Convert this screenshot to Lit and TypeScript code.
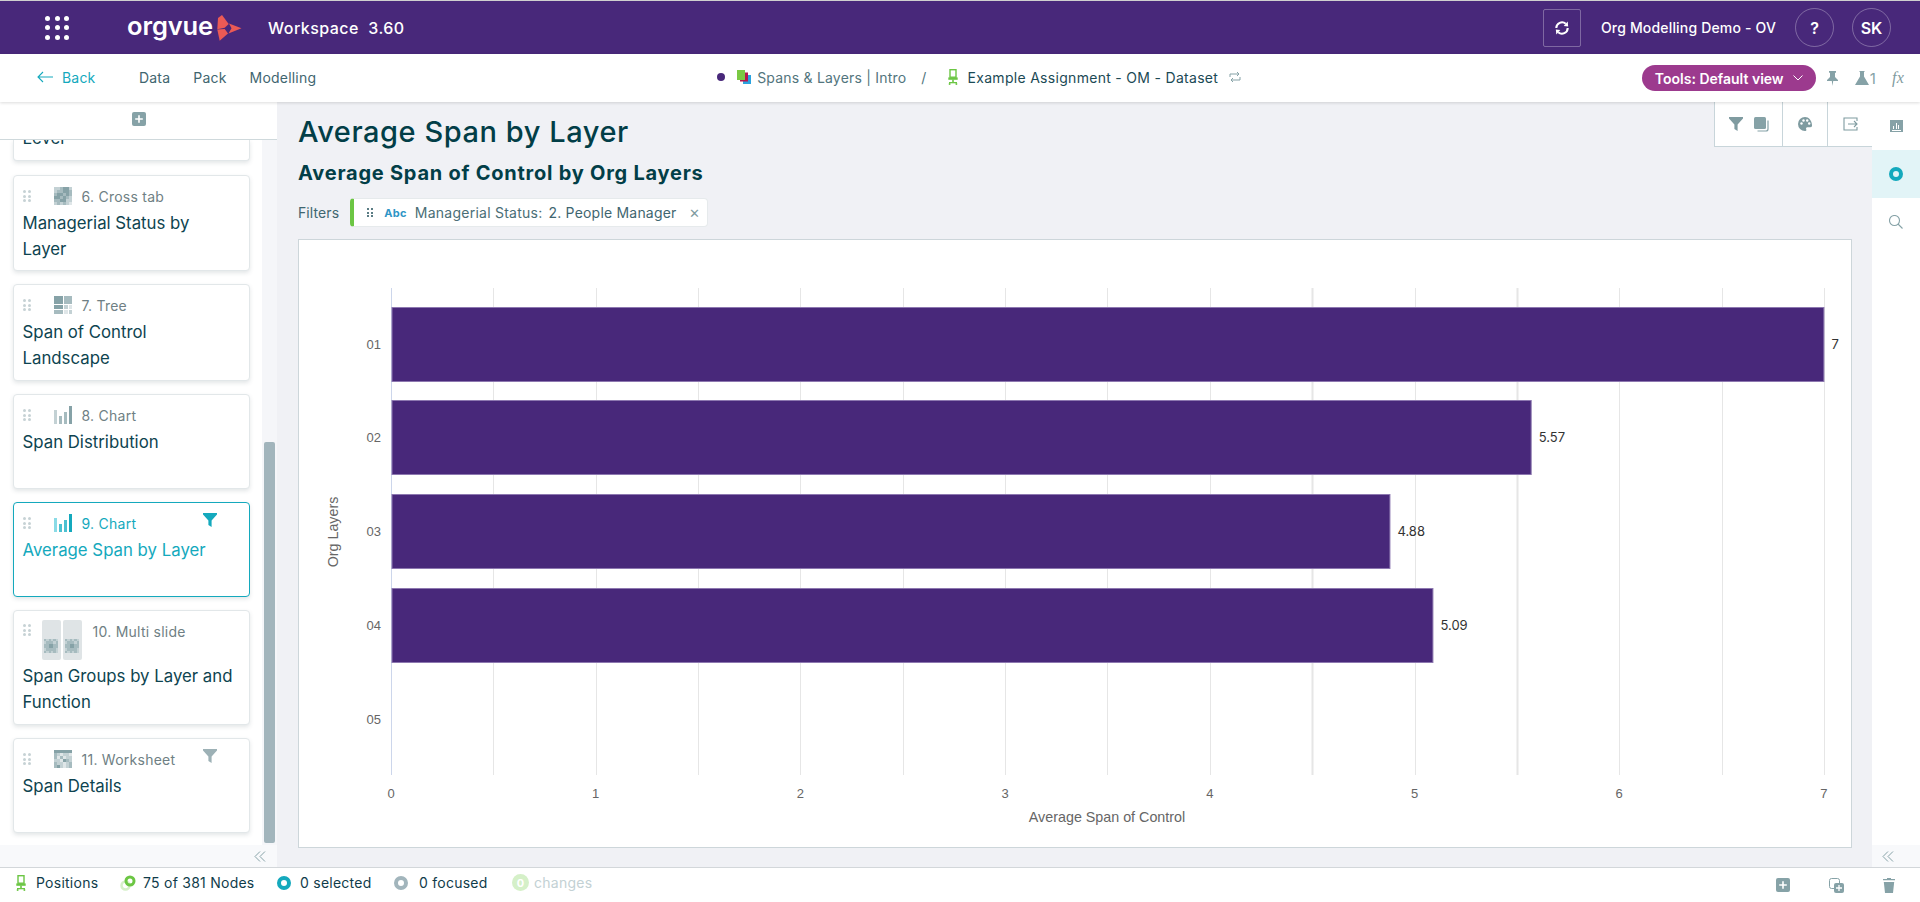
import { LitElement, html, css, svg } from "lit";
import { customElement } from "lit/decorators.js";

const funnel = (c: string) => html`<svg width="14" height="14" viewBox="0 0 14 14"><path fill="${c}" d="M0 0h14v1.6L8.6 7.4V14L5.4 12V7.4L0 1.6z"/></svg>`;

const mosaic = (cols: number, cells: number[], top = 0) => {
  const s = 18 / cols;
  const shades = ["#dfe6e8", "#c3d1d4", "#a6bbbf", "#86a2a7"];
  return html`<svg class="thumb" width="18" height="18" viewBox="0 0 18 18" shape-rendering="crispEdges">
    ${cells.map((v, i) => svg`<rect x="${(i % cols) * s}" y="${top + Math.floor(i / cols) * s}" width="${s}" height="${s}" fill="${shades[v]}"/>`)}
  </svg>`;
};
const crossCells = [1,1,2,3,3,1, 1,2,2,3,3,2, 2,3,3,2,3,2, 3,3,2,3,2,1, 2,2,3,3,1,1, 1,2,1,2,1,0];
const sheetCells = [3,3,3,3,3,3, 2,1,0,1,1,0, 2,0,2,0,1,1, 1,1,0,3,2,1, 2,1,1,0,1,2, 2,3,1,0,1,2];

const treeIcon = html`<svg class="thumb" width="18" height="18" viewBox="0 0 18 18" shape-rendering="crispEdges">
  <rect width="9" height="8" fill="#86a2a7"/><rect x="10" width="8" height="8" fill="#a6bbbf"/>
  <rect y="9" width="9" height="4" fill="#86a2a7"/><rect y="14" width="9" height="4" fill="#a6bbbf"/>
  <rect x="10" y="9" width="3.5" height="4" fill="#c3d1d4"/><rect x="14.5" y="9" width="3.5" height="4" fill="#dfe6e8"/>
  <rect x="10" y="14" width="3.5" height="4" fill="#dfe6e8"/><rect x="14.5" y="14" width="3.5" height="4" fill="#c3d1d4"/>
</svg>`;
const chartIcon = (a: string, b: string, c: string) => html`<svg class="thumb" width="18" height="18" viewBox="0 0 18 18" shape-rendering="crispEdges">
  <rect y="4" width="3" height="14" fill="${a}"/><rect x="5" y="10" width="3" height="8" fill="${b}"/>
  <rect x="10" y="6" width="3" height="12" fill="${b}"/><rect x="15" width="3" height="18" fill="${c}"/>
</svg>`;
function mosaicSmall() {
  return html`<svg width="14" height="14" viewBox="0 0 6 6" shape-rendering="crispEdges">
    ${[2,1,2,1,2,1, 1,2,2,2,1,2, 2,2,3,3,2,2, 2,2,3,3,2,2, 1,2,2,2,2,1, 2,1,2,1,2,1].map((v, i) =>
      svg`<rect x="${i % 6}" y="${Math.floor(i / 6)}" width="1" height="1" fill="${["#dfe6e8", "#c3d1d4", "#a6bbbf", "#86a2a7"][v]}"/>`)}
  </svg>`;
}
const multiIcon = html`<div class="multi">
  ${[0, 1].map(() => html`<div class="panel">${mosaicSmall()}</div>`)}
</div>`;
const chairIcon = html`<svg width="10" height="16" viewBox="0 0 10 16" fill="none">
  <rect x="2" y="0.7" width="6" height="7.5" stroke="#6cc644" stroke-width="1.4"/>
  <rect x="0.3" y="8.4" width="9.4" height="2.4" fill="#6cc644"/><rect x="4.2" y="10.6" width="1.6" height="3" fill="#6cc644"/>
  <rect x="1" y="13" width="8" height="1.3" fill="#6cc644"/><circle cx="1.6" cy="15" r="1" fill="#6cc644"/><circle cx="8.4" cy="15" r="1" fill="#6cc644"/>
</svg>`;
const ring = (c: string) => html`<span class="ring" style="border-color:${c}"></span>`;

interface Card { label: string; icon: unknown; title: string[]; size: string; filter?: string; active?: boolean; multi?: boolean; }
const cards: Card[] = [
  { label: "6. Cross tab", icon: mosaic(6, crossCells), title: ["Managerial Status by", "Layer"], size: "h96" },
  { label: "7. Tree", icon: treeIcon, title: ["Span of Control", "Landscape"], size: "h97" },
  { label: "8. Chart", icon: chartIcon("#c3d1d4", "#a6bbbf", "#86a2a7"), title: ["Span Distribution"], size: "h95" },
  { label: "9. Chart", icon: chartIcon("#8adbe6", "#4cc1d1", "#14a9bd"), title: ["Average Span by Layer"], filter: "#14a9bd", active: true, size: "h95" },
  { label: "10. Multi slide", icon: multiIcon, title: ["Span Groups by Layer and", "Function"], multi: true, size: "tall" },
  { label: "11. Worksheet", icon: mosaic(6, sheetCells), title: ["Span Details"], filter: "#9db1b6", size: "h95" },
];

const X0 = 92, UNIT = 204.7, GT = 48, GB = 535;
const bars = [
  { k: "01", v: 7, y: 67 },
  { k: "02", v: 5.57, y: 160 },
  { k: "03", v: 4.88, y: 254 },
  { k: "04", v: 5.09, y: 348 },
];

@customElement("app-root")
export class AppRoot extends LitElement {
  static styles = css`
    :host { display: flex; flex-direction: column; height: 902px; width: 1920px; overflow: hidden; font-family: Inter, "Liberation Sans", sans-serif; color: #0e4450; background: #fff; }
    * { box-sizing: border-box; }
    svg { display: block; flex: none; }

    .top { height: 54px; flex: none; background: #48287a; border-top: 1px solid #cfcfcf; color: #fff; display: flex; align-items: center; padding-left: 45px; padding-right: 29px; }
    .apps { display: grid; grid-template-columns: repeat(3, 5px); gap: 4.5px; width: 24px; }
    .apps i { width: 5px; height: 5px; border-radius: 50%; background: #fff; }
    .brand { margin-left: 58px; font-size: 25.5px; font-weight: 600; letter-spacing: -0.1px; line-height: 30px; padding-bottom: 3px; }
    .mark { margin-left: 4px; }
    .ws { margin-left: 26px; font-size: 16px; font-weight: 500; white-space: pre; letter-spacing: .45px; }
    .top-right { margin-left: auto; display: flex; align-items: center; }
    .sync { width: 38px; height: 38px; border: 1px solid rgba(255,255,255,.3); border-radius: 2px; display: flex; align-items: center; justify-content: center; }
    .org { margin-left: 20px; margin-right: 19px; font-size: 14px; font-weight: 500; letter-spacing: .17px; }
    .circ { width: 39px; height: 39px; border: 1px solid rgba(255,255,255,.3); border-radius: 50%; display: flex; align-items: center; justify-content: center; font-weight: 600; font-size: 16px; }
    .circ + .circ { margin-left: 18px; }

    .nav { height: 48px; flex: none; background: #fff; display: flex; align-items: center; padding-left: 37px; padding-bottom: 2px; box-shadow: 0 1px 3px rgba(0,0,0,.14); position: relative; z-index: 3; font-size: 14px; color: #3f6670; letter-spacing: .2px; }
    .back { display: flex; align-items: center; gap: 9px; color: #14a9bd; width: 102px; }
    .nav-links { display: flex; gap: 23px; }
    .crumb { margin-left: 401px; display: flex; align-items: center; }
    .dot { width: 8px; height: 8px; border-radius: 50%; background: #48287a; margin-right: 12px; }
    .pack { margin-left: 6px; color: #52757d; }
    .sl { margin: 0 21px 0 15px; color: #52757d; }
    .ds { margin-left: 10px; color: #1b4a55; letter-spacing: .3px; }
    .rep { margin-left: 11px; }
    .nav-right { margin-left: auto; margin-top: 2px; display: flex; align-items: center; padding-right: 16px; }
    .pill { width: 174px; height: 26px; border-radius: 13px; background: #9c3a8e; color: #fff; font-weight: 600; font-size: 14px; letter-spacing: 0; display: flex; align-items: center; justify-content: center; gap: 9px; }
    .flask { margin-left: 17px; display: flex; align-items: center; gap: 1px; color: #86a2a7; font-size: 15px; }
    .fx { margin-left: 16px; font-family: "Liberation Serif", serif; font-style: italic; font-size: 16px; color: #7f9ba0; }
    .pin { margin-left: 11px; }

    .body { flex: 1; min-height: 0; display: flex; background: #f0f1f5; }
    .side { width: 277px; flex: none; display: flex; flex-direction: column; background: #f5f6f9; }
    .add { height: 38px; flex: none; background: #fff; border-bottom: 1px solid #cfd9dc; padding-bottom: 3px; display: flex; align-items: center; justify-content: center; position: relative; z-index: 1; }
    .side-mid { flex: 1; min-height: 0; display: flex; }
    .list { width: 262px; flex: none; background: #fff; overflow: hidden; padding-left: 12.5px; display: flex; flex-direction: column; gap: 13px; }
    .track { flex: 1; padding: 302px 2px 2px; }
    .thumb-bar { height: 100%; background: #a2b5bc; border-radius: 2px; }
    .collapse { height: 22px; flex: none; background: #f8f9fb; display: flex; align-items: center; justify-content: flex-end; padding-right: 11px; }

    .card { width: 237px; flex: none; background: #fff; border: 1px solid #e2e7e9; border-radius: 4px; box-shadow: 0 2px 4px rgba(40,60,70,.13); padding: 10px 0 0 9px; }
    .card.h95 { height: 95px; }
    .card.h96 { height: 96px; }
    .card.h97 { height: 97px; }
    .card.tall { height: 115px; }
    .card.cut { height: 21px; margin-bottom: 1px; border-top: none; border-radius: 0 0 4px 4px; padding: 0 0 0 9px; overflow: hidden; }
    .card.cut .t { margin: -15px 0 0; }
    .card.active { border-color: #14a9bd; }
    .head { display: flex; align-items: center; height: 20px; }
    .tall .head { height: 42px; align-items: flex-start; margin-top: -1px; }
    .grip { width: 8px; margin-right: 23px; display: grid; grid-template-columns: repeat(2, 3px); gap: 1.5px 2px; flex: none; }
    .grip i { width: 3px; height: 3px; background: #c6d2d5; border-radius: 50%; }
    .tall .grip { margin-right: 11px; margin-top: 4px; }
    .tall .lbl { margin-left: 11px; margin-top: 2px; line-height: 20px; }
    .lbl { margin-left: 10px; font-size: 14px; color: #6f7f84; letter-spacing: .25px; }
    .active .lbl { color: #14a9bd; }
    .fn { margin-left: auto; margin-right: 32px; margin-top: -7px; }
    .t { font-size: 16.8px; line-height: 26px; color: #0e4450; margin-top: 4px; letter-spacing: 0; }
    .tall .t { margin-top: 1px; }
    .active .t { color: #14a9bd; }
    .multi { display: flex; gap: 2px; margin-left: 0; }
    .panel { width: 19px; height: 40px; background: #dfe4e6; border-radius: 2px; display: flex; align-items: flex-end; justify-content: center; padding-bottom: 7px; }

    .main { flex: 1; min-width: 0; padding: 11px 20px 19px 21px; display: flex; flex-direction: column; position: relative; }
    h1 { margin: 0; font-size: 29px; line-height: 38px; font-weight: 500; color: #023e47; letter-spacing: .55px; }
    h2 { margin: 10px 0 0; font-size: 20px; line-height: 25px; font-weight: 700; color: #023e47; letter-spacing: .76px; }
    .filters { margin-top: 12px; height: 29px; display: flex; align-items: center; font-size: 14px; color: #3f6670; flex: none; letter-spacing: .1px; }
    .chip { margin-left: 11px; width: 358px; height: 29px; background: #fff; border: 1px solid #e6eaec; border-left: 4px solid #6cc644; border-radius: 4px; display: flex; align-items: center; padding-left: 13px; }
    .chip .abc { margin-left: 11px; font-size: 11px; font-weight: 700; color: #2e95c6; letter-spacing: .3px; }
    .chip .k { margin-left: 8px; color: #4a6e76; letter-spacing: .25px; }
    .chip .v { margin-left: 6px; color: #3f6670; letter-spacing: .2px; }
    .chip .x { margin-left: auto; margin-right: 7px; color: #7f9ba0; font-size: 13px; }
    .chip-dots { display: grid; grid-template-columns: repeat(2, 2px); gap: 1.5px 2px; }
    .chip-dots i { width: 2px; height: 2px; background: #5a7c84; }
    .chart { margin-top: 12px; flex: 1; min-height: 0; background: #fff; border: 1px solid #cdd6da; }
    .val { font-family: Inter, sans-serif; font-size: 13px; fill: #333; }
    .tick { font-family: "Liberation Sans", sans-serif; font-size: 13px; fill: #666; }
    .axis { font-family: "Liberation Sans", sans-serif; font-size: 14.3px; fill: #666; }

    .tools { position: absolute; top: 0; right: 0; height: 45px; background: #fff; border-left: 1px solid #c8d5da; border-bottom: 1px solid #c8d5da; display: flex; }
    .tools > div { display: flex; align-items: center; justify-content: center; gap: 11px; border-left: 1px solid #c8d5da; }
    .tools > div:first-child { border-left: none; width: 67px; }
    .tools > div:nth-child(2) { width: 45px; }
    .tools > div:nth-child(3) { width: 45px; }

    .rail { width: 48px; flex: none; background: #fff; display: flex; flex-direction: column; }
    .rail-i { height: 48px; display: flex; align-items: center; justify-content: center; }
    .rail-i.on { background: #e2f4f7; }
    .rail .collapse { margin-top: auto; justify-content: flex-start; padding-right: 0; padding-left: 10px; }

    .status { height: 35px; flex: none; background: #fff; border-top: 1px solid #d3d7da; display: flex; align-items: center; padding-left: 16px; padding-right: 25px; padding-bottom: 5px; font-size: 14px; color: #103c4a; letter-spacing: .25px; }
    .it { display: flex; align-items: center; }
    .ring { width: 14px; height: 14px; border-radius: 50%; border: 4px solid; display: block; flex: none; }
    .zero { width: 17px; height: 17px; border-radius: 50%; background: #d5f0c8; color: #fff; font-size: 11px; font-weight: 700; display: flex; align-items: center; justify-content: center; }
    .ch { color: #c3d1d4; margin-left: 5px; }
    .st-right { margin-left: auto; margin-top: 5px; display: flex; align-items: center; gap: 39px; }
  `;

  private chart() {
    const lines = Array.from({ length: 15 }, (_, i) => i);
    return html`<svg width="1551" height="607" viewBox="0 0 1551 607">
      ${lines.map((i) => {
        const x = Math.round(X0 + (i / 2) * UNIT) + 0.5;
        const thick = i === 9 || i === 11;
        return svg`<line x1="${x}" x2="${x}" y1="${GT}" y2="${GB}" stroke="${i === 0 ? "#ccd6eb" : "#e6e6e6"}" stroke-width="${thick ? 2 : 1}"/>`;
      })}
      ${bars.map((b) => svg`
        <rect x="${X0 + 1}" y="${b.y + 0.5}" width="${b.v * UNIT - 1}" height="74" fill="#48287a" stroke="#8d78b0" stroke-width="1"/>
        <text x="${X0 + b.v * UNIT + 7.5}" y="${b.y + 41.5}" class="val">${b.v}</text>
      `)}
      ${["01", "02", "03", "04", "05"].map((k, i) => svg`
        <text x="82" y="${108.5 + i * 93.75}" text-anchor="end" class="tick">${k}</text>`)}
      ${[0, 1, 2, 3, 4, 5, 6, 7].map((n) => svg`
        <text x="${X0 + n * UNIT}" y="558" text-anchor="middle" class="tick">${n}</text>`)}
      <text x="808" y="582" text-anchor="middle" class="axis">Average Span of Control</text>
      <text transform="translate(39 292) rotate(-90)" text-anchor="middle" class="axis">Org Layers</text>
    </svg>`;
  }

  render() {
    const grip = html`<div class="grip">${[0, 1, 2, 3, 4, 5].map(() => html`<i></i>`)}</div>`;
    const plus = html`<svg width="14" height="14" viewBox="0 0 14 14"><rect width="14" height="14" rx="2" fill="#86a2a7"/><path d="M7 3.2v7.6M3.2 7h7.6" stroke="#fff" stroke-width="1.6"/></svg>`;
    const chev = html`<svg width="12" height="11" viewBox="0 0 12 11" fill="none" stroke="#86a2a7" stroke-width="1"><path d="M6 .5 1 5.5l5 5M11 .5 6 5.5l5 5"/></svg>`;
    return html`
      <div class="top">
        <div class="apps">${[...Array(9)].map(() => html`<i></i>`)}</div>
        <div class="brand">orgvue</div>
        <svg class="mark" width="25" height="26" viewBox="0 0 25 26" fill="#eb5a55">
          <path d="M1 3 5 0 11.7 9 7.700 12.700.3 14.300z"/><path d="M.3 14.500 7.700 14 11 18.500 2.700 25.700z"/><path d="M12 8.500 24.500 13.300 11.500 18.500 14.500 13.300z"/>
        </svg>
        <div class="ws">Workspace  3.60</div>
        <div class="top-right">
          <div class="sync"><svg width="16" height="16" viewBox="0 0 14 14" fill="none" stroke="#fff" stroke-width="1.8"><path d="M2 7a5 5 0 0 1 8.3-3.7M12 7a5 5 0 0 1-8.3 3.7"/><path fill="#fff" stroke="none" d="M8.5 5.2 12.4 5.6 12 1.4zM5.5 8.8 1.6 8.4 2 12.6z"/></svg></div>
          <div class="org">Org Modelling Demo - OV</div>
          <div class="circ">?</div>
          <div class="circ">SK</div>
        </div>
      </div>

      <div class="nav">
        <div class="back"><svg width="16" height="12" viewBox="0 0 16 12" fill="none" stroke="#14a9bd" stroke-width="1.1"><path d="M16 6H1M6 1 1 6l5 5"/></svg>Back</div>
        <div class="nav-links"><span>Data</span><span>Pack</span><span>Modelling</span></div>
        <div class="crumb">
          <span class="dot"></span>
          <svg width="14" height="14" viewBox="0 0 14 14"><rect x="6" y="5" width="8" height="9" fill="#2aa3e0"/><rect x="3" y="2.5" width="8" height="9" fill="#b5174f"/><rect width="8" height="10" fill="#7ac943"/></svg>
          <span class="pack">Spans &amp; Layers | Intro</span>
          <span class="sl">/</span>
          ${chairIcon}
          <span class="ds">Example Assignment - OM - Dataset</span>
          <svg class="rep" width="12" height="12" viewBox="0 0 12 12" fill="none" stroke="#86a2a7" stroke-width="1"><path d="M1 6V3h9M8 1l2 2-2 2M11 6v3H2M4 11 2 9l2-2"/></svg>
        </div>
        <div class="nav-right">
          <div class="pill">Tools: Default view <svg width="10" height="6" viewBox="0 0 10 6" fill="none" stroke="#fff" stroke-width="1"><path d="M.5.5 5 5 9.5.5"/></svg></div>
          <svg class="pin" width="11" height="15" viewBox="0 0 11 15" fill="#86a2a7"><path d="M2 0h7v1.5L8 2v4l3 3v1H6.2L5.500 15l-.7-5H0V9l3-3V2L2 1.500z"/></svg>
          <div class="flask"><svg width="14" height="14" viewBox="0 0 14 14" fill="#86a2a7"><path d="M4.500 0h5v1H9v4.500L14 14H0L5 5.500V1h-.5z"/></svg>1</div>
          <span class="fx">fx</span>
        </div>
      </div>

      <div class="body">
        <div class="side">
          <div class="add">${plus}</div>
          <div class="side-mid">
            <div class="list">
              <div class="card cut"><div class="t">Level</div></div>
              ${cards.map((c) => html`
                <div class="card ${c.size} ${c.active ? "active" : ""}">
                  <div class="head">
                    ${grip}${c.icon}<span class="lbl">${c.label}</span>
                    ${c.filter ? html`<span class="fn">${funnel(c.filter)}</span>` : ""}
                  </div>
                  <div class="t">${c.title.map((l) => html`<div>${l}</div>`)}</div>
                </div>`)}
            </div>
            <div class="track"><div class="thumb-bar"></div></div>
          </div>
          <div class="collapse">${chev}</div>
        </div>

        <div class="main">
          <h1>Average Span by Layer</h1>
          <h2>Average Span of Control by Org Layers</h2>
          <div class="filters">Filters
            <div class="chip">
              <div class="chip-dots">${[0, 1, 2, 3, 4, 5].map(() => html`<i></i>`)}</div>
              <span class="abc">Abc</span><span class="k">Managerial Status:</span><span class="v">2. People Manager</span><span class="x">✕</span>
            </div>
          </div>
          <div class="chart">${this.chart()}</div>
          <div class="tools">
            <div>${funnel("#7f9ba0")}<svg width="15" height="15" viewBox="0 0 15 15"><rect width="12" height="12" rx="1.5" fill="#86a2a7"/><path d="M14 3.5V12a2 2 0 0 1-2 2H3.5" fill="none" stroke="#86a2a7" stroke-width="1.2"/></svg></div>
            <div><svg width="14" height="14" viewBox="0 0 14 14"><path fill="#7f9ba0" d="M7 0a7 7 0 0 0 0 14c1.2 0 1.6-.9 1.2-1.7-.5-1 .1-2 1.3-2H12a2 2 0 0 0 2-2.3C13.700 3.400 10.800 0 7 0z"/><circle cx="3.500" cy="6.500" r="1.200" fill="#fff"/><circle cx="5.500" cy="3.500" r="1.200" fill="#fff"/><circle cx="9.200" cy="3.500" r="1.200" fill="#fff"/><circle cx="11.200" cy="6.500" r="1.200" fill="#fff"/></svg></div>
            <div><svg width="15" height="14" viewBox="0 0 15 14" fill="none" stroke="#7f9ba0" stroke-width="1.1"><path d="M14 4V1H1v12h13v-3M5 7h9M11 4l3 3-3 3"/></svg></div>
          </div>
        </div>

        <div class="rail">
          <div class="rail-i"><svg width="13" height="12" viewBox="0 0 13 12" shape-rendering="crispEdges"><rect width="13" height="12" fill="#86a2a7"/><path d="M3 9V6h1v3zM5.500 9V3h1v6zM8 9V5h1v4zM2 10h9v.8H2z" fill="#fff"/></svg></div>
          <div class="rail-i on"><span class="ring" style="border-color:#14a9bd"></span></div>
          <div class="rail-i"><svg width="14" height="14" viewBox="0 0 14 14" fill="none" stroke="#86a2a7" stroke-width="1.1"><circle cx="5.500" cy="5.500" r="5"/><path d="M9 9l4.500 4.500"/></svg></div>
          <div class="collapse">${chev}</div>
        </div>
      </div>

      <div class="status">
        <div class="it" style="width:104px">${chairIcon}<span style="margin-left:10px">Positions</span></div>
        <div class="it" style="width:157px"><svg width="16" height="16" viewBox="0 0 16 16" fill="none"><circle cx="5.500" cy="10.500" r="4" stroke="#d5f0c8" stroke-width="2.500"/><circle cx="10" cy="6" r="4" stroke="#6cc644" stroke-width="3"/></svg><span style="margin-left:7px">75 of 381 Nodes</span></div>
        <div class="it" style="width:117px">${ring("#14a9bd")}<span style="margin-left:9px">0 selected</span></div>
        <div class="it" style="width:118px">${ring("#a2b5bc")}<span style="margin-left:11px">0 focused</span></div>
        <div class="it"><span class="zero">0</span><span class="ch">changes</span></div>
        <div class="st-right">
          ${plus}
          <svg width="15" height="15" viewBox="0 0 15 15"><rect x=".5" y=".5" width="10" height="10" rx="2" fill="none" stroke="#86a2a7"/><rect x="5" y="5" width="10" height="10" rx="2" fill="#86a2a7"/><path d="M10 7v6M7 10h6" stroke="#fff" stroke-width="1.300"/></svg>
          <svg width="12" height="15" viewBox="0 0 12 15" fill="#86a2a7"><path d="M4 0h4v1h4v1.300H0V1h4zM.8 4h10.400L10 15H2z"/></svg>
        </div>
      </div>
    `;
  }
}
